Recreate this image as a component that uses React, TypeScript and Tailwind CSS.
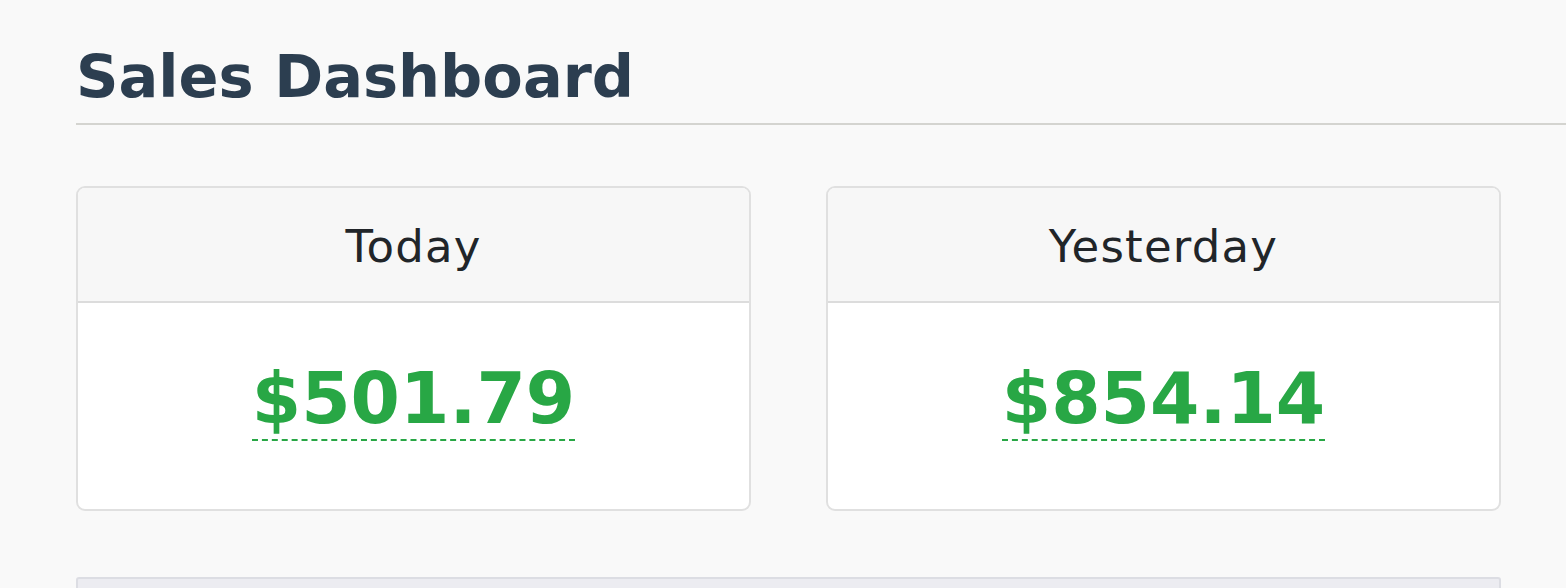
import React from "react";

type Stat = { label: string; amount: string };

const stats: Stat[] = [
  { label: "Today", amount: "$501.79" },
  { label: "Yesterday", amount: "$854.14" },
];

function StatCard({ stat }: { stat: Stat }) {
  return (
    <div className="w-[675px] bg-white border-2 border-[#e0e0e0] rounded-[9px] overflow-hidden">
      <div className="h-[115px] bg-[#f7f7f7] border-b-2 border-[#dcdcdc] flex items-center justify-center">
        <span className="text-[45px] tracking-[1.2px] text-[#212529] leading-none pt-[4px]">{stat.label}</span>
      </div>
      <div className="h-[206px] flex justify-center pt-[60px]">
        <span className="inline-block h-fit text-[71px] font-bold leading-none text-[#28a745] pb-[5px] border-b-2 border-dashed border-[#28a745]">
          {stat.amount}
        </span>
      </div>
    </div>
  );
}

export default function App() {
  return (
    <div
      className="min-h-screen bg-[#f9f9f9] pl-[76px] pt-[47px] overflow-hidden"
      style={{ fontFamily: '"DejaVu Sans", Verdana, sans-serif' }}
    >
      <h1 className="text-[59px] font-bold leading-none text-[#2c3e50] pb-[17px] border-b-2 border-[#d4d4d0]">
        Sales Dashboard
      </h1>
      <div className="mt-[61px] w-[1425px] flex gap-[75px]">
        {stats.map((s) => (
          <StatCard key={s.label} stat={s} />
        ))}
      </div>
      <div className="mt-[66px] w-[1425px] h-[60px] bg-[#ececf1] border-2 border-[#dcdde3] rounded-t-[3px]" />
    </div>
  );
}
